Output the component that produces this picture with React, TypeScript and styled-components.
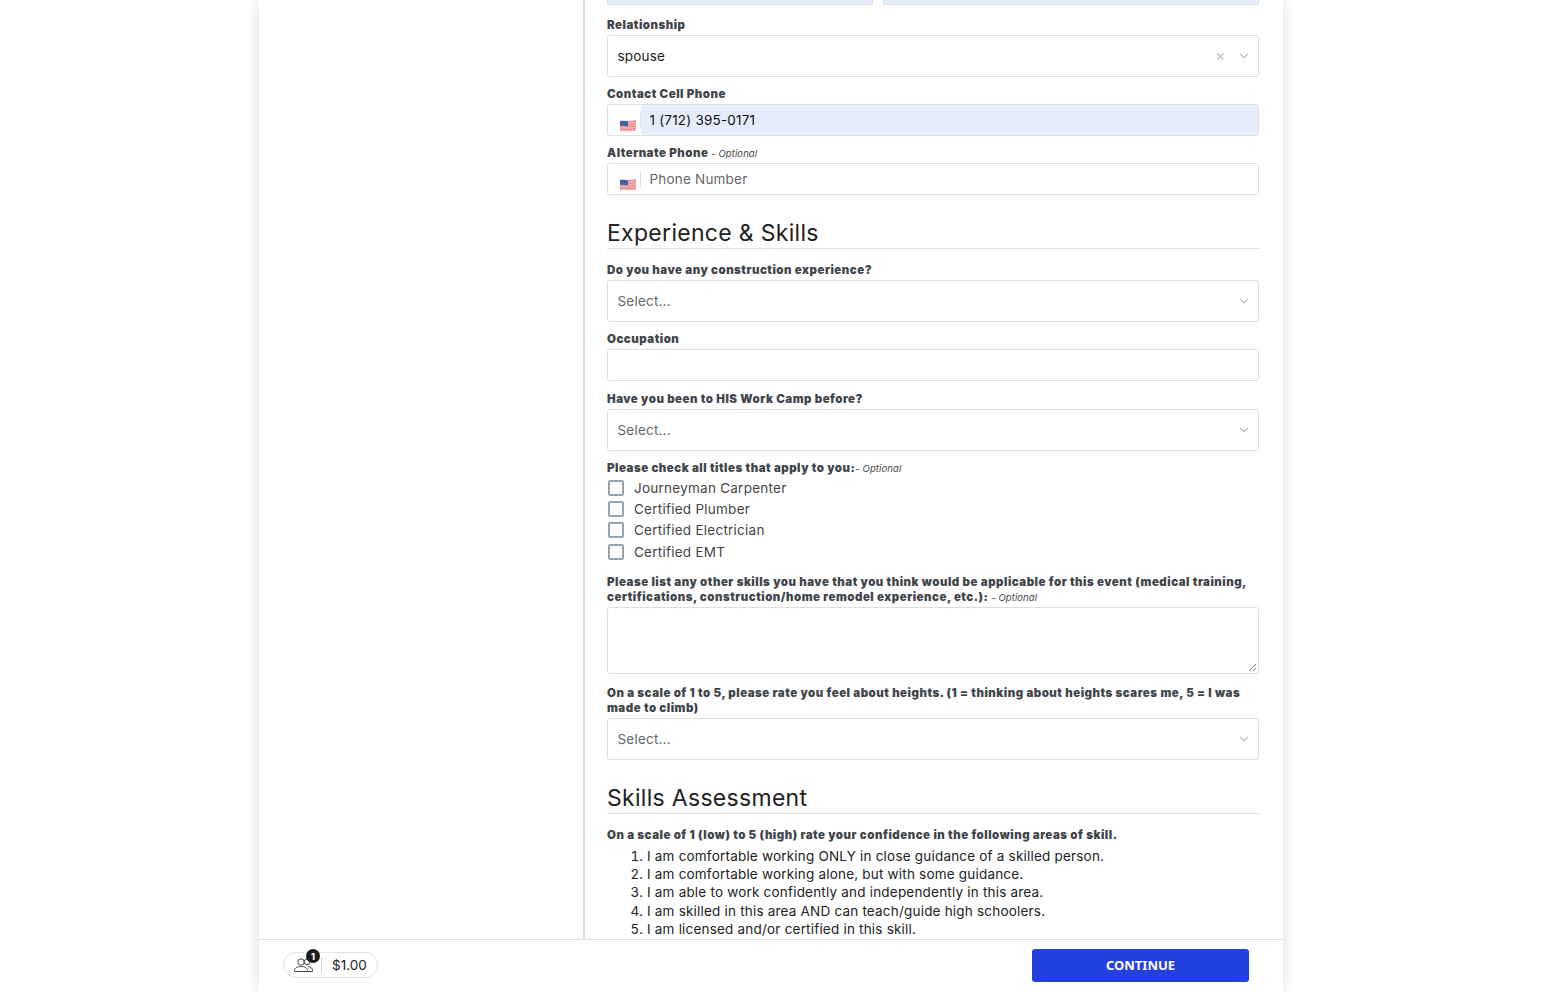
import React from 'react';
import styled, { createGlobalStyle } from 'styled-components';
import { ChevronDown, X } from 'lucide-react';

const GlobalStyle = createGlobalStyle`
  html, body {
    margin: 0;
    padding: 0;
    height: 100%;
    overflow: hidden;
    background: #fff;
  }
  body {
    font-family: 'Inter', 'Liberation Sans', sans-serif;
    color: #2f3338;
  }
`;

const Page = styled.div`
  width: 1024px;
  height: 992px;
  margin-left: 259px;
  display: flex;
  flex-direction: column;
  background: #fff;
  box-shadow: 0 0 14px rgba(0, 0, 0, 0.14);
`;

const Body = styled.div`
  flex: 1;
  min-height: 0;
  display: flex;
  overflow: hidden;
`;

const Sidebar = styled.div`
  width: 324px;
  border-right: 2px solid #d9d9d9;
`;

const Main = styled.div`
  width: 652px;
  margin-left: 22px;
`;

const ClippedRow = styled.div`
  display: flex;
  gap: 10px;
  height: 5px;
  margin-bottom: 13px;
`;

const ClippedInput = styled.div<{ $grow: number }>`
  flex: ${p => p.$grow};
  background: #e5ecfb;
  border: 1px solid #dedede;
  border-top: 0;
  border-radius: 0 0 3px 3px;
`;

const Label = styled.div`
  font-size: 11.5px;
  line-height: 15.5px;
  font-weight: 900;
  letter-spacing: 0.5px;
  color: #40454b;
  margin-bottom: 1.5px;
`;

const Optional = styled.span`
  font-size: 9.5px;
  font-weight: 400;
  font-style: italic;
  letter-spacing: 0.1px;
  color: #444;
`;

const Field = styled.div<{ $gap?: number }>`
  margin-bottom: ${p => p.$gap ?? 10}px;
`;

const SelectBox = styled.div`
  height: 42px;
  box-sizing: border-box;
  border: 1px solid #dedede;
  border-radius: 3px;
  display: flex;
  align-items: center;
  padding: 0 7px 0 9.5px;
  font-size: 13.5px;
  letter-spacing: 0.2px;
`;

const SelectValue = styled.span<{ $placeholder?: boolean }>`
  flex: 1;
  color: ${p => (p.$placeholder ? '#666' : '#222')};
`;

const ClearIcon = styled(X)`
  color: #bdbdbd;
  margin-right: 11px;
`;

const Chevron = styled(ChevronDown)`
  color: #bdbdbd;
`;

const TextBox = styled.div`
  height: 32px;
  box-sizing: border-box;
  border: 1px solid #dedede;
  border-radius: 3px;
`;

const PhoneBox = styled.div`
  height: 32px;
  box-sizing: border-box;
  border: 1px solid #dedede;
  border-radius: 3px;
  display: flex;
  overflow: hidden;
`;

const FlagCell = styled.div`
  width: 33px;
  flex: none;
  padding: 13.5px 0 0 10.5px;
  box-sizing: border-box;
`;

const FlagIcon = styled.svg`
  display: block;
`;

const PhoneValue = styled.div<{ $filled?: boolean }>`
  flex: 1;
  display: flex;
  align-items: center;
  padding-left: 8.5px;
  font-size: 13.5px;
  letter-spacing: 0.2px;
  background: ${p => (p.$filled ? '#e5ecfb' : '#fff')};
  color: ${p => (p.$filled ? '#111' : '#666')};
  border-radius: ${p => (p.$filled ? '3px 0 0 3px' : '0')};
  position: relative;

  &::before {
    content: '';
    position: absolute;
    left: -1px;
    top: 7px;
    height: 16px;
    border-left: 1px solid #dedede;
  }
`;

const Heading = styled.h2`
  margin: 23px 0 14px;
  font-size: 23px;
  line-height: 31px;
  font-weight: 400;
  letter-spacing: 0.3px;
  color: #222;
  border-bottom: 1px solid #dedede;
  height: 30px;
`;

const CheckList = styled.div`
  margin-top: -1px;
  margin-bottom: 12px;
`;

const CheckRow = styled.div`
  height: 21.4px;
  display: flex;
  align-items: center;
  gap: 10px;
  padding-left: 1px;
  font-size: 13.5px;
  letter-spacing: 0.25px;
  color: #444;
`;

const CheckBox = styled.span`
  width: 16px;
  height: 16px;
  box-sizing: border-box;
  border: 2px solid #97a3ad;
  border-radius: 2px;
  flex: none;
`;

const TextArea = styled.div`
  height: 67px;
  box-sizing: border-box;
  border: 1px solid #dedede;
  border-radius: 3px;
  position: relative;
`;

const ResizeGrip = styled.svg`
  position: absolute;
  right: 1px;
  bottom: 1px;
`;

const ScaleList = styled.ol`
  margin: 3px 0 0;
  padding-left: 40px;
  font-size: 13.5px;
  line-height: 18.4px;
  letter-spacing: 0.2px;
  color: #222;
`;

const Footer = styled.div`
  height: 53px;
  flex: none;
  box-sizing: border-box;
  border-top: 1px solid #dedede;
  display: flex;
  align-items: center;
  justify-content: space-between;
  padding: 0 34px 2px 24px;
`;

const CartPill = styled.div`
  width: 95px;
  height: 26px;
  box-sizing: border-box;
  border: 1px solid #e2e2e2;
  border-radius: 13px;
  display: flex;
  align-items: center;
  position: relative;
  font-size: 13.5px;
  color: #222;
`;

const PillIcon = styled.div`
  width: 38px;
  height: 16px;
  flex: none;
  box-sizing: border-box;
  border-right: 1px solid #d4d4d4;
  padding-left: 9px;
  display: flex;
  align-items: center;
  margin-right: 10px;
`;

const Badge = styled.span`
  position: absolute;
  left: 22px;
  top: -4px;
  width: 14px;
  height: 14px;
  border-radius: 50%;
  background: #1c1c1c;
  color: #fff;
  font-size: 9px;
  font-weight: 800;
  display: flex;
  align-items: center;
  justify-content: center;
`;

const ContinueButton = styled.button`
  width: 217px;
  height: 33px;
  border: 0;
  border-radius: 3px;
  background: #2341e0;
  color: #fff;
  font-family: 'Noto Sans', sans-serif;
  font-size: 13px;
  font-weight: 700;
`;

const Flag = () => (
  <FlagIcon width="18" height="13" viewBox="0 0 18 13">
    <path d="M1 2C6 1.2 12 2.600 17 .4v11.400c-5 1.400-11-.6-16 .6z" fill="#f3b3b3" />
    <path d="M1 5.400c5-.8 11 .8 16-.8M1 7.800c5-.8 11 .8 16-.8M1 10.200c5-.8 11 .8 16-.8M9 2.800c3 .2 5.500 0 8-.7" stroke="#e58a8c" fill="none" />
    <path d="M1 2c3-.5 5-.2 8 .2v5c-3-.4-5-.7-8-.2z" fill="#3f62a8" />
  </FlagIcon>
);

const PeopleIcon = () => (
  <svg width="20" height="18" viewBox="0 0 20 18" fill="none" stroke="#333" strokeWidth="0.9">
    <circle cx="8" cy="6" r="3.2" />
    <circle cx="14" cy="6" r="2.8" />
    <path d="M1.500 15.500v-1c0-2.600 3-4 6.500-4s6.500 1.400 6.500 4v1z" fill="#fff" />
    <path d="M15 10.600c2.600.2 4.500 1.600 4.500 3.900v1h-5" />
  </svg>
);

const Select = ({ value, clearable }: { value?: string; clearable?: boolean }) => (
  <SelectBox>
    <SelectValue $placeholder={!value}>{value ?? 'Select...'}</SelectValue>
    {clearable && <ClearIcon size={11} strokeWidth={2.5} />}
    <Chevron size={14} />
  </SelectBox>
);

const Phone = ({ value }: { value?: string }) => (
  <PhoneBox>
    <FlagCell>
      <Flag />
    </FlagCell>
    <PhoneValue $filled={!!value}>{value ?? 'Phone Number'}</PhoneValue>
  </PhoneBox>
);

const titles = ['Journeyman Carpenter', 'Certified Plumber', 'Certified Electrician', 'Certified EMT'];

const scale = [
  'I am comfortable working ONLY in close guidance of a skilled person.',
  'I am comfortable working alone, but with some guidance.',
  'I am able to work confidently and independently in this area.',
  'I am skilled in this area AND can teach/guide high schoolers.',
  'I am licensed and/or certified in this skill.',
];

const App: React.FC = () => (
  <>
    <GlobalStyle />
    <Page>
      <Body>
        <Sidebar />
        <Main>
          <ClippedRow>
            <ClippedInput $grow={265} />
            <ClippedInput $grow={376} />
          </ClippedRow>
          <Field>
            <Label>Relationship</Label>
            <Select value="spouse" clearable />
          </Field>
          <Field>
            <Label>Contact Cell Phone</Label>
            <Phone value="1 (712) 395-0171" />
          </Field>
          <Field>
            <Label>
              Alternate Phone <Optional>- Optional</Optional>
            </Label>
            <Phone />
          </Field>
          <Heading>Experience &amp; Skills</Heading>
          <Field>
            <Label>Do you have any construction experience?</Label>
            <Select />
          </Field>
          <Field $gap={11}>
            <Label>Occupation</Label>
            <TextBox />
          </Field>
          <Field>
            <Label>Have you been to HIS Work Camp before?</Label>
            <Select />
          </Field>
          <Label>
            Please check all titles that apply to you:<Optional>- Optional</Optional>
          </Label>
          <CheckList>
            {titles.map(t => (
              <CheckRow key={t}>
                <CheckBox />
                {t}
              </CheckRow>
            ))}
          </CheckList>
          <Field $gap={11.5}>
            <Label>
              Please list any other skills you have that you think would be applicable for this event (medical
              training, certifications, construction/home remodel experience, etc.): <Optional>- Optional</Optional>
            </Label>
            <TextArea>
              <ResizeGrip width="9" height="9" viewBox="0 0 9 9">
                <path d="M1 8L8 1M5 8l3-3" stroke="#777" strokeWidth="1" fill="none" />
              </ResizeGrip>
            </TextArea>
          </Field>
          <Field>
            <Label>
              On a scale of 1 to 5, please rate you feel about heights. (1 = thinking about heights scares me, 5 = I
              was made to climb)
            </Label>
            <Select />
          </Field>
          <Heading>Skills Assessment</Heading>
          <Label>On a scale of 1 (low) to 5 (high) rate your confidence in the following areas of skill.</Label>
          <ScaleList>
            {scale.map(s => (
              <li key={s}>{s}</li>
            ))}
          </ScaleList>
        </Main>
      </Body>
      <Footer>
        <CartPill>
          <PillIcon>
            <PeopleIcon />
          </PillIcon>
          <Badge>1</Badge>
          $1.00
        </CartPill>
        <ContinueButton>CONTINUE</ContinueButton>
      </Footer>
    </Page>
  </>
);

export default App;
